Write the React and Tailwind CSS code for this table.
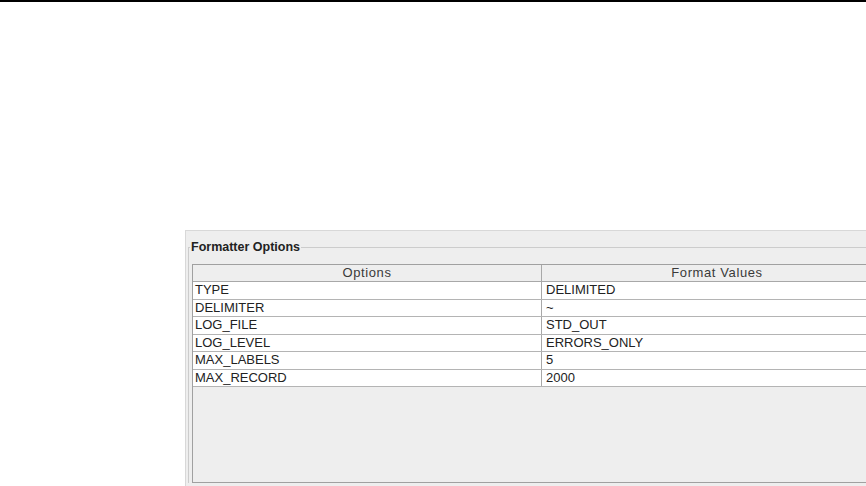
import React from 'react';

const rows = [
  ['TYPE', 'DELIMITED'],
  ['DELIMITER', '~'],
  ['LOG_FILE', 'STD_OUT'],
  ['LOG_LEVEL', 'ERRORS_ONLY'],
  ['MAX_LABELS', '5'],
  ['MAX_RECORD', '2000'],
];

export default function App() {
  return (
    <div className="w-[866px] h-[486px] bg-white overflow-hidden flex flex-col" style={{ fontFamily: '"Liberation Sans", Arial, sans-serif' }}>
      <div className="h-[2px] bg-black shrink-0" />
      <div className="flex-1 pt-[228px] pl-[185px] flex">
        <div className="flex-1 bg-[#eeeeee] border-t border-l border-[#d8d8d8] pl-[2px]">
          <fieldset className="mt-[9px] border-t border-l border-[#cccccc] pl-[3px] pt-[10px]">
            <legend className="-ml-[2px] px-[1px] text-[12.5px] leading-[14px] font-bold text-[#222222]">Formatter Options</legend>
            <div className="w-[720px] h-[219px] border border-[#a0a0a0] bg-[#eeeeee] text-[13px]">
              <div className="flex h-[17px] border-b border-[#a8a8a8] text-[#3a3a3a] leading-[16px]">
                <div className="w-[349px] border-r border-[#a8a8a8] text-center tracking-[0.6px]">Options</div>
                <div className="w-[350px] text-center tracking-[0.6px]">Format Values</div>
              </div>
              {rows.map(([k, v]) => (
                <div key={k} className="flex h-[17.5px] border-b border-[#b4b4b4] bg-white text-[#222222] leading-[16.5px]">
                  <div className="w-[349px] border-r border-[#a8a8a8] pl-[2px]">{k}</div>
                  <div className="flex-1 pl-[4px]">{v}</div>
                </div>
              ))}
            </div>
          </fieldset>
        </div>
      </div>
    </div>
  );
}
